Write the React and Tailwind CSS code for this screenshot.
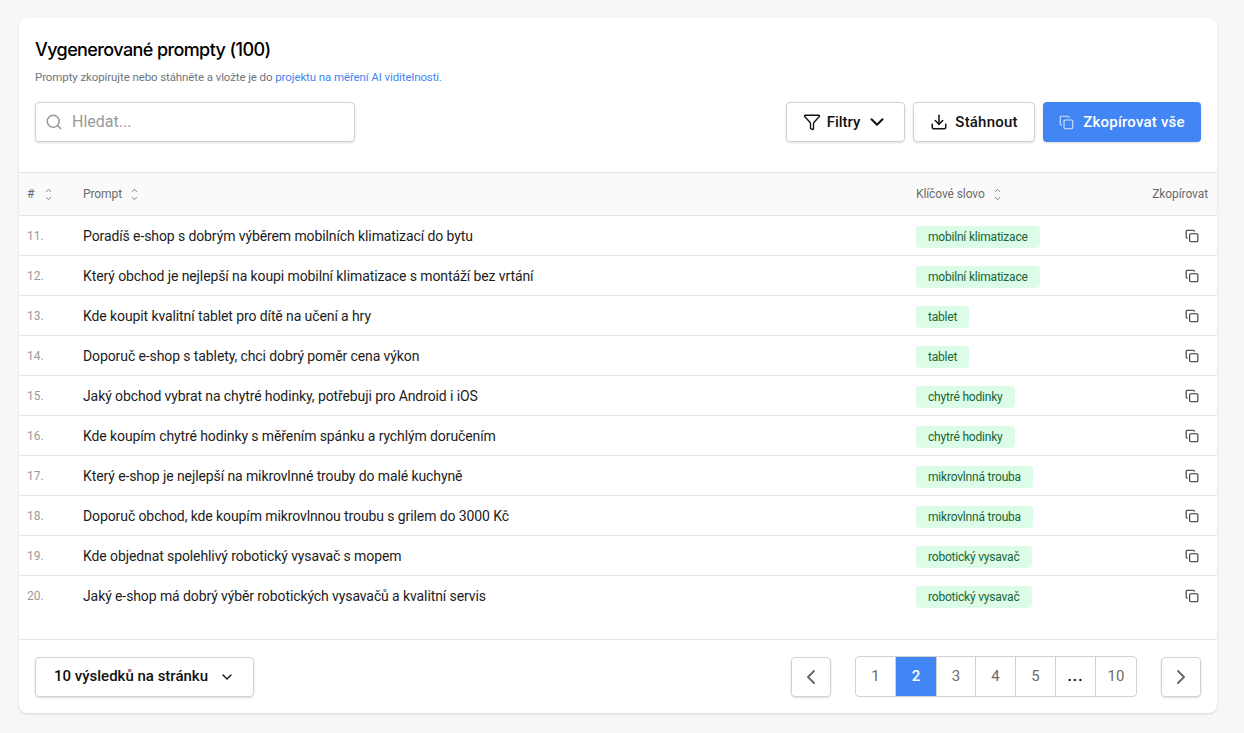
import { Search, Filter, ChevronDown, ChevronUp, ChevronLeft, ChevronRight, Download, Copy } from "lucide-react";

const rows = [
  [11, "Poradíš e-shop s dobrým výběrem mobilních klimatizací do bytu", "mobilní klimatizace"],
  [12, "Který obchod je nejlepší na koupi mobilní klimatizace s montáží bez vrtání", "mobilní klimatizace"],
  [13, "Kde koupit kvalitní tablet pro dítě na učení a hry", "tablet"],
  [14, "Doporuč e-shop s tablety, chci dobrý poměr cena výkon", "tablet"],
  [15, "Jaký obchod vybrat na chytré hodinky, potřebuji pro Android i iOS", "chytré hodinky"],
  [16, "Kde koupím chytré hodinky s měřením spánku a rychlým doručením", "chytré hodinky"],
  [17, "Který e-shop je nejlepší na mikrovlnné trouby do malé kuchyně", "mikrovlnná trouba"],
  [18, "Doporuč obchod, kde koupím mikrovlnnou troubu s grilem do 3000 Kč", "mikrovlnná trouba"],
  [19, "Kde objednat spolehlivý robotický vysavač s mopem", "robotický vysavač"],
  [20, "Jaký e-shop má dobrý výběr robotických vysavačů a kvalitní servis", "robotický vysavač"],
];

function SortIcon() {
  return (
    <span className="flex flex-col items-center text-[#6b6b6b]">
      <ChevronUp size={9} strokeWidth={2.2} />
      <ChevronDown size={9} strokeWidth={2.2} className="-mt-px" />
    </span>
  );
}

function Row({ num, text, tag }) {
  return (
    <div className="flex h-10 items-center border-b border-[#e5e5e5] last:border-b-0">
      <span className="w-[64px] pl-2 text-xs text-[#9a9a9a]">{num}.</span>
      <span className="w-[833px] text-sm tracking-[-0.1px] text-[#1c1c1c]">{text}</span>
      <span className="flex-1">
        <span className="mt-[2px] inline-block rounded bg-[#dcfce7] px-3 py-[3px] text-xs leading-4 tracking-[-0.2px] text-[#166534]">{tag}</span>
      </span>
      <Copy size={14} strokeWidth={1.8} className="mr-[18px] text-[#2a2a2a]" />
    </div>
  );
}

export default function App() {
  return (
    <div className="min-h-[733px] bg-[#f7f7f7] pt-[18px] pl-[19px] font-['Roboto',sans-serif]">
      <div className="h-[695px] w-[1198px] rounded-lg bg-white shadow-sm">
        <div className="h-[155px] border-b border-[#e5e5e5] px-4 pt-[20px]">
          <h1 className="font-['Inter',sans-serif] text-lg leading-6 font-medium tracking-[-0.6px] text-black">Vygenerované prompty (100)</h1>
          <p className="mt-[7px] text-[11.5px] leading-4 tracking-[-0.1px] text-[#6f7680]">
            Prompty zkopírujte nebo stáhněte a vložte je do <span className="text-[#4285f4]">projektu na měření AI viditelnosti.</span>
          </p>
          <div className="mt-[17px] flex items-start justify-between">
            <div className="flex h-10 w-[320px] items-center gap-[9px] rounded border border-[#d1d1d1] px-[9px] shadow-sm">
              <Search size={18} strokeWidth={2} className="text-[#9a9a9a]" />
              <span className="text-base text-[#9a9a9a]">Hledat...</span>
            </div>
            <div className="flex gap-2">
              <button className="flex h-10 w-[119px] items-center justify-center gap-[6px] rounded border border-[#d1d1d1] text-[15px] font-medium text-[#111] shadow-sm">
                <Filter size={18} strokeWidth={1.8} />
                Filtry
                <ChevronDown size={22} strokeWidth={2.2} />
              </button>
              <button className="flex h-10 w-[122px] items-center justify-center gap-[7px] rounded border border-[#d1d1d1] text-[15px] font-medium tracking-[0.2px] text-[#111] shadow-sm">
                <Download size={18} strokeWidth={2} />
                Stáhnout
              </button>
              <button className="flex h-10 w-[158px] items-center justify-center gap-[9px] rounded bg-[#4285f4] text-[15px] font-medium tracking-[0.2px] text-white shadow-sm">
                <Copy size={15} strokeWidth={1.8} className="text-[#d6e4fd]" />
                Zkopírovat vše
              </button>
            </div>
          </div>
        </div>

        <div className="flex h-[43px] items-center border-b border-[#e5e5e5] bg-[#fafafa] text-xs tracking-[-0.1px] text-[#6b6b6b]">
          <span className="flex w-[64px] items-center gap-[10px] pl-2">
            # <SortIcon />
          </span>
          <span className="flex w-[833px] items-center gap-2">
            Prompt <SortIcon />
          </span>
          <span className="flex flex-1 items-center gap-2">
            Klíčové slovo <SortIcon />
          </span>
          <span className="pr-[9px]">Zkopírovat</span>
        </div>

        <div className="h-[424px] border-b border-[#e5e5e5]">
          {rows.map(([num, text, tag]) => (
            <Row key={num} num={num} text={text} tag={tag} />
          ))}
        </div>

        <div className="flex items-center justify-between px-4 pt-4">
          <button className="flex h-10 w-[219px] items-center justify-center gap-[11px] rounded border border-[#d1d1d1] text-[15px] font-medium text-[#111] shadow-sm">
            10 výsledků na stránku
            <ChevronDown size={16} strokeWidth={2} />
          </button>
          <div className="flex items-center gap-6">
            <button className="flex h-10 w-10 items-center justify-center rounded border border-[#d1d1d1] text-[#6b6b6b] shadow-sm">
              <ChevronLeft size={24} strokeWidth={2} />
            </button>
            <div className="flex h-[41px] overflow-hidden rounded border border-[#d1d1d1] text-[15px] text-[#6b6b6b]">
              <span className="flex w-10 items-center justify-center border-r border-[#d1d1d1]">1</span>
              <span className="flex w-10 items-center justify-center bg-[#4285f4] font-medium text-white">2</span>
              <span className="flex w-10 items-center justify-center border-x border-[#d1d1d1]">3</span>
              <span className="flex w-10 items-center justify-center border-r border-[#d1d1d1]">4</span>
              <span className="flex w-10 items-center justify-center border-r border-[#d1d1d1]">5</span>
              <span className="flex w-10 items-center justify-center border-r border-[#d1d1d1] font-bold tracking-[1px] text-[#111]">...</span>
              <span className="flex w-10 items-center justify-center">10</span>
            </div>
            <button className="flex h-10 w-10 items-center justify-center rounded border border-[#d1d1d1] text-[#6b6b6b] shadow-sm">
              <ChevronRight size={24} strokeWidth={2} />
            </button>
          </div>
        </div>
      </div>
    </div>
  );
}
